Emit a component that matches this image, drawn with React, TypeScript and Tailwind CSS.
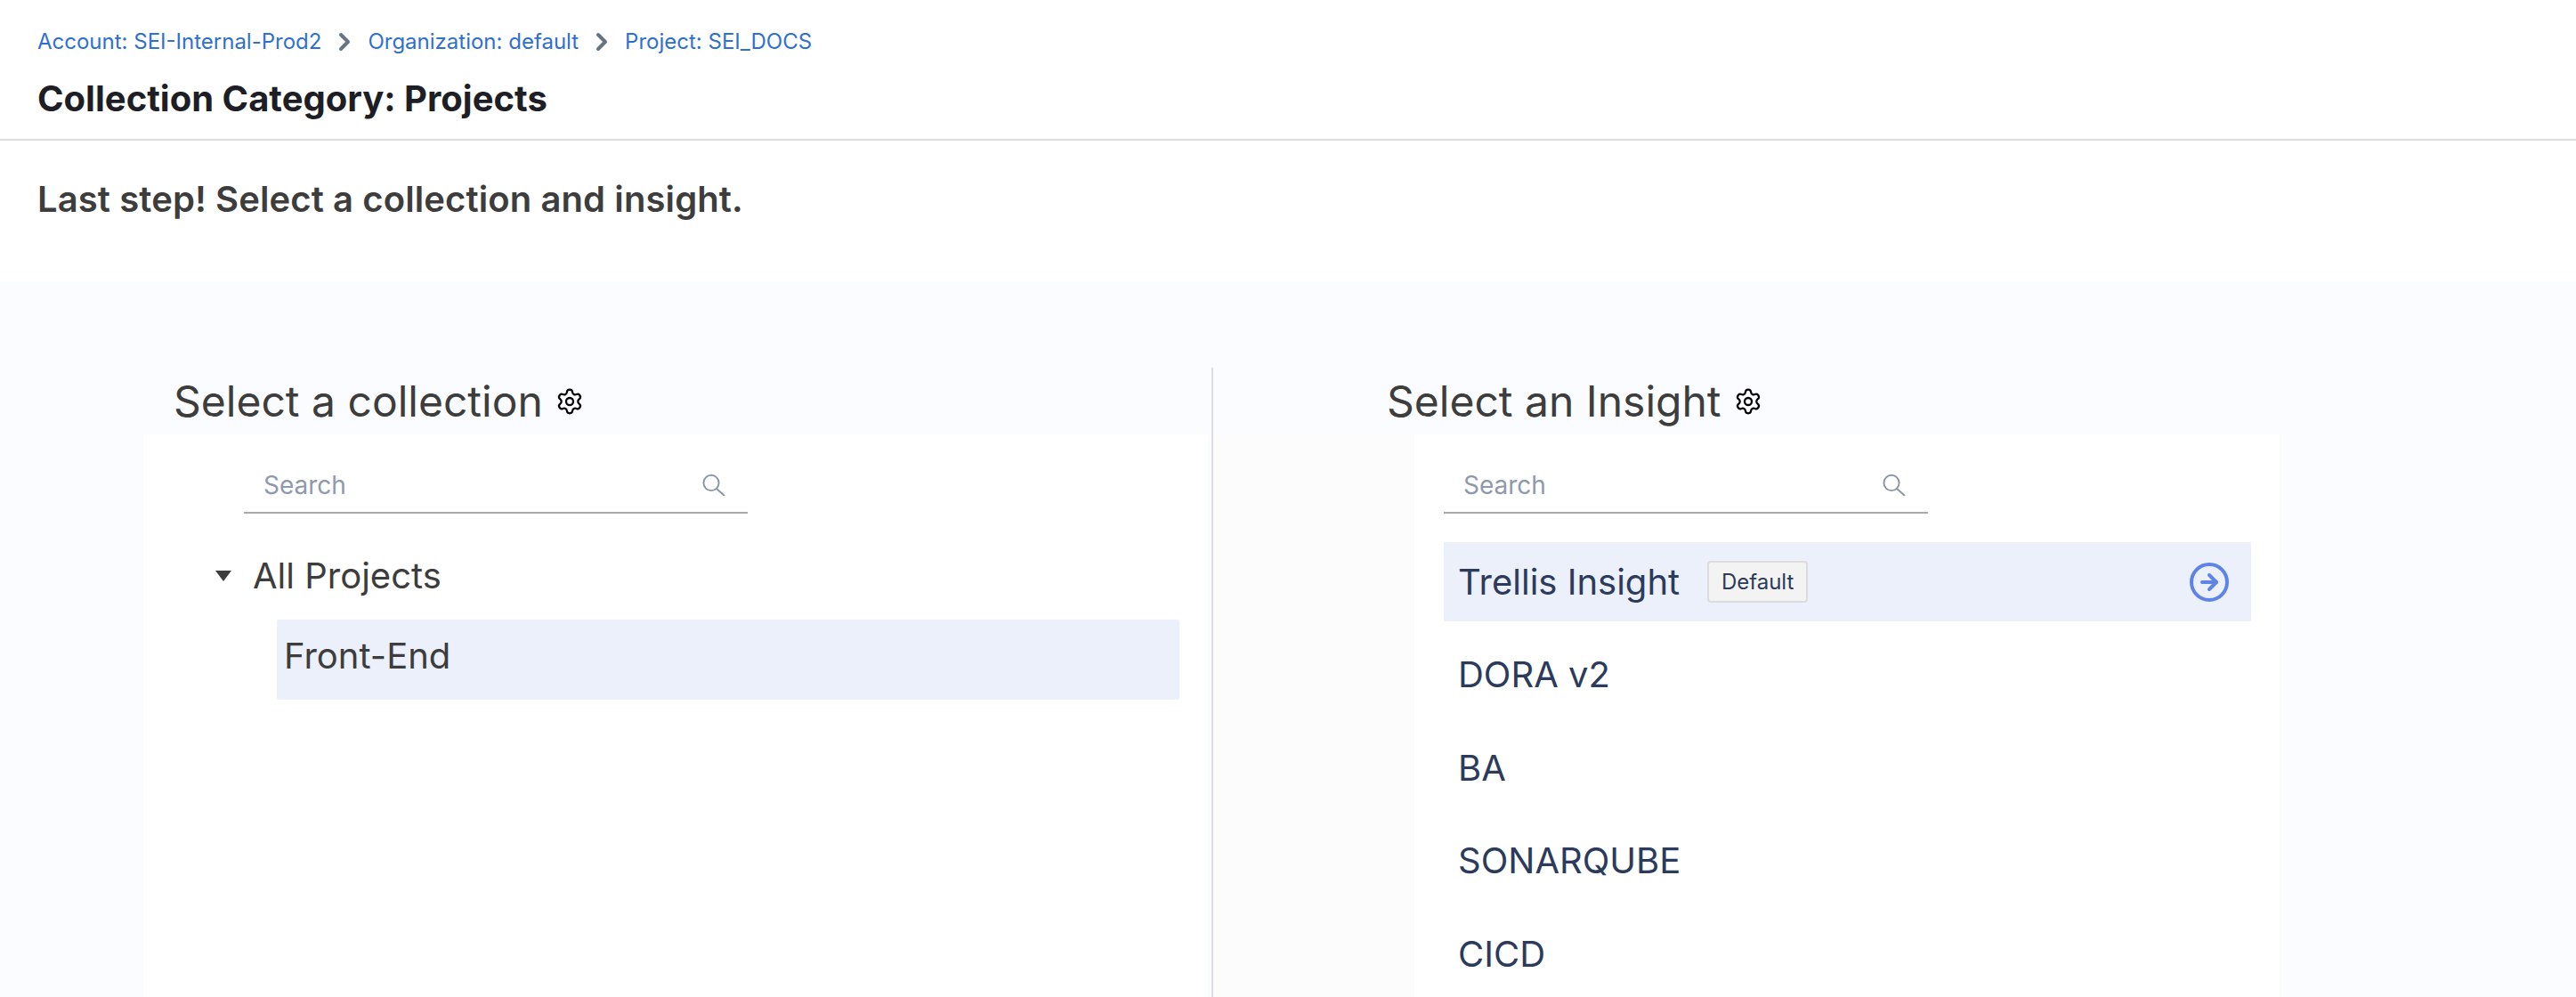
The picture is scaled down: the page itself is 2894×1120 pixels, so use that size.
import { ChevronRight, CircleArrowRight, Settings } from "lucide-react";

const insights = ["DORA v2", "BA", "SONARQUBE", "CICD"];

function SearchBox({ width }: { width: string }) {
  return (
    <div className={`flex h-[66px] items-center justify-between border-b-2 border-[#a9a9a9] pl-[22px] pr-[25px] pt-[4px] ${width}`}>
      <span className="text-[28px] text-[#8f99ad]">Search</span>
      <svg width="26" height="24" viewBox="0 0 26 24" fill="none" stroke="currentColor" strokeWidth="1.9" className="text-[#8a94a8]">
        <circle cx="10" cy="9.5" r="8.6" />
        <path d="M16 16l9 8" />
      </svg>
    </div>
  );
}

function SectionTitle({ title }: { title: string }) {
  return (
    <div className="flex h-[75px] items-center gap-[14px]">
      <h2 className="text-[48px] font-normal leading-none text-[#3d3d3d]">{title}</h2>
      <Settings size={32} strokeWidth={1.7} className="text-black" />
    </div>
  );
}

export default function App() {
  return (
    <div className="h-[1120px] w-[2894px] overflow-hidden bg-white font-['Inter',sans-serif]">
      {/* header */}
      <div className="h-[158px] border-b-2 border-[#dcdce4] pl-[42px] pt-[28px]">
        <div className="flex h-[38px] items-center text-[24px] text-[#2f6fd0]">
          <span>Account: SEI-Internal-Prod2</span>
          <ChevronRight size={32} strokeWidth={3} className="mx-[10px] text-[#667485]" />
          <span>Organization: default</span>
          <ChevronRight size={32} strokeWidth={3} className="mx-[10px] text-[#667485]" />
          <span>Project: SEI_DOCS</span>
        </div>
        <h1 className="mt-[21px] text-[40px] font-bold leading-[48px] text-[#1e1f26]">Collection Category: Projects</h1>
      </div>

      <div className="h-[159px] pl-[42px] pt-[42px]">
        <p className="text-[40px] font-semibold leading-[48px] tracking-[0.1px] text-[#3d3d3d]">Last step! Select a collection and insight.</p>
      </div>

      {/* two columns */}
      <div className="flex h-[803px] bg-[#fbfcff] pt-[96px]">
        <div className="w-[1363px] border-r-2 border-[#dcdce4] pl-[161px] pr-[4px]">
          <div className="pl-[34px]">
            <SectionTitle title="Select a collection" />
          </div>
          <div className="h-full bg-white pl-[113px] pt-[23px]">
            <SearchBox width="w-[566px]" />
            <div className="mt-[48px] flex h-[44px] items-center text-[40px]">
              <svg width="20" height="14" viewBox="0 0 20 14" className="ml-[-33px] mr-[23px] text-[#3d3d3d]">
                <path d="M1 1h18L10 13z" fill="currentColor" />
              </svg>
              <span className="text-[#3d3d3d]">All Projects</span>
            </div>
            <div className="ml-[37px] mt-[27px] flex h-[90px] w-[1014px] items-center rounded-[2px] bg-[#ebf0fa] pb-[8px] pl-[8px] text-[40px] text-[#3d3d3d]">
              Front-End
            </div>
          </div>
        </div>

        <div className="w-[1198px]">
          <div className="pl-[195px]">
            <SectionTitle title="Select an Insight" />
          </div>
          <div className="h-full bg-[#fcfcfd] pl-[226px]">
            <div className="h-full w-[972px] bg-white pl-[33px] pt-[23px]">
              <SearchBox width="w-[544px]" />
              <div className="mt-[32px] flex h-[89px] w-[907px] items-center justify-between bg-[#ebf0fa] pl-[16px] pr-[23px]">
                <div className="flex items-center gap-[31px]">
                  <span className="text-[40px] text-[#2c3a5c]">Trellis Insight</span>
                  <span className="flex h-[47px] w-[113px] items-center justify-center rounded-[4px] border-2 border-[#dcdcdc] bg-[#f3f3f3] text-[24px] text-[#2c3a5c]">
                    Default
                  </span>
                </div>
                <CircleArrowRight size={48} strokeWidth={2} className="text-[#5f84e8]" />
              </div>
              {insights.map((name) => (
                <div key={name} className="mt-[15.6px] flex h-[89px] items-center pl-[16px] text-[40px] text-[#2c3a5c]">
                  {name}
                </div>
              ))}
            </div>
          </div>
        </div>
      </div>
    </div>
  );
}
